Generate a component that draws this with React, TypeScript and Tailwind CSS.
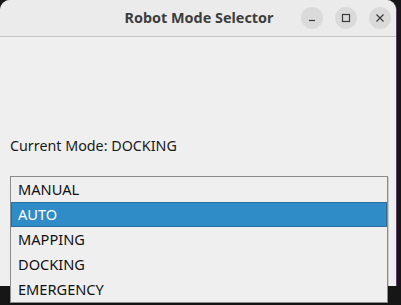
import React, { useState } from 'react';

const modes = ['MANUAL', 'AUTO', 'MAPPING', 'DOCKING', 'EMERGENCY'];

const WinButton = ({ children }: { children: React.ReactNode }) => (
  <div className="w-[22px] h-[22px] rounded-full bg-[#dadada] flex items-center justify-center text-[#3a3a3a]">
    {children}
  </div>
);

const App = () => {
  const [selected, setSelected] = useState('AUTO');
  const current = 'DOCKING';

  return (
    <div
      className="relative w-[401px] h-[305px] bg-[#161616] overflow-hidden"
      style={{ fontFamily: '"Noto Sans", "DejaVu Sans", sans-serif' }}
    >
      {/* Window */}
      <div className="w-[397px] h-[286px] rounded-t-[10px] bg-[#efefef] flex flex-col border-r border-[#5a3d6a]">
        {/* Title bar */}
        <div className="h-[37px] shrink-0 bg-[#ebebeb] rounded-t-[10px] border-b border-[#c4c4c4] flex items-center relative">
          <div className="flex-1 text-center text-[14.4px] font-bold text-[#3d3d3d] pl-[2px]">Robot Mode Selector</div>
          <div className="absolute right-[5px] top-[7px] flex gap-[12px]">
            <WinButton>
              <svg width="10" height="10" viewBox="0 0 10 10">
                <path d="M2 7.5h6" stroke="currentColor" strokeWidth="1.2" />
              </svg>
            </WinButton>
            <WinButton>
              <svg width="10" height="10" viewBox="0 0 10 10">
                <rect x="1.5" y="1.5" width="7" height="7" fill="none" stroke="currentColor" strokeWidth="1.2" />
              </svg>
            </WinButton>
            <WinButton>
              <svg width="10" height="10" viewBox="0 0 10 10">
                <path d="M1.5 1.5l7 7M8.5 1.5l-7 7" stroke="currentColor" strokeWidth="1.2" />
              </svg>
            </WinButton>
          </div>
        </div>

        {/* Body */}
        <div className="flex-1 px-[10px] pt-[100px]">
          <div className="text-[14.3px] text-[#1a1a1a] leading-[18px]">Current Mode: {current}</div>
        </div>
      </div>

      {/* Dropdown popup */}
      <div className="absolute left-[10px] top-[176px] w-[378px] border border-[#8c8c8c] bg-[#efefef] shadow-[1px_1px_0_rgba(0,0,0,0.15)]">
        {modes.map((m) => (
          <div
            key={m}
            onClick={() => setSelected(m)}
            className={
              m === selected
                ? 'h-[25px] flex items-center pl-[6px] text-[14.6px] bg-[#308cc6] text-white border border-[#2a6f9c]'
                : 'h-[25px] flex items-center pl-[6px] text-[14.6px] text-[#111111] border border-transparent'
            }
          >
            {m}
          </div>
        ))}
      </div>
    </div>
  );
};

export default App;
